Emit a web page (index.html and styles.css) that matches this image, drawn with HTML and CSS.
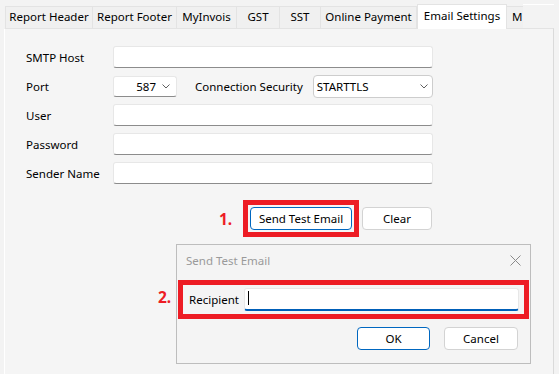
FILE: index.html
```html
<!DOCTYPE html>
<html lang="en">
<head>
    <meta charset="UTF-8">
    <title>Email Settings</title>
    <link rel="stylesheet" href="styles.css">
</head>
<body>
    <div class="tabs">
        <div class="tab w-header">Report Header</div>
        <div class="tab w-footer">Report Footer</div>
        <div class="tab w-myinvois">MyInvois</div>
        <div class="tab w-gst">GST</div>
        <div class="tab w-sst">SST</div>
        <div class="tab w-online">Online Payment</div>
        <div class="tab active w-email">Email Settings</div>
        <div class="tab cut">M</div>
        <div class="tab-fill"></div>
    </div>

    <div class="panel">
        <div class="form">
            <div class="row">
                <span class="label">SMTP Host</span>
                <div class="field wide"></div>
            </div>
            <div class="row">
                <span class="label">Port</span>
                <div class="field combo port">
                    <span class="value">587</span>
                    <svg class="chevron" width="8" height="5" viewBox="0 0 8 5"><polyline points="0.5,0.5 4,4 7.5,0.5" fill="none" stroke="#606060" stroke-width="1"/></svg>
                </div>
                <span class="label security">Connection Security</span>
                <div class="select">
                    <span class="value">STARTTLS</span>
                    <svg class="chevron" width="8" height="5" viewBox="0 0 8 5"><polyline points="0.5,0.5 4,4 7.5,0.5" fill="none" stroke="#606060" stroke-width="1"/></svg>
                </div>
            </div>
            <div class="row">
                <span class="label">User</span>
                <div class="field wide"></div>
            </div>
            <div class="row">
                <span class="label">Password</span>
                <div class="field wide"></div>
            </div>
            <div class="row">
                <span class="label">Sender Name</span>
                <div class="field wide"></div>
            </div>
        </div>

        <div class="actions">
            <span class="step">1.</span>
            <span class="mark"><button class="btn primary send">Send Test Email</button></span>
            <button class="btn clear">Clear</button>
        </div>

        <div class="dialog">
            <div class="dialog-title">
                <span>Send Test Email</span>
                <svg width="11" height="11" viewBox="0 0 11 11"><path d="M0.5 0.5 L10.5 10.5 M10.5 0.5 L0.5 10.5" stroke="#8a8a8a" stroke-width="1" fill="none"/></svg>
            </div>
            <div class="dialog-row">
                <span class="step step-two">2.</span>
                <span class="dialog-label">Recipient</span>
                <div class="field focused"><span class="caret"></span></div>
            </div>
            <div class="dialog-buttons">
                <button class="btn primary ok">OK</button>
                <button class="btn cancel">Cancel</button>
            </div>
        </div>
    </div>
</body>
</html>
```

FILE: styles.css
```css
body {
    margin: 0;
    background: #f3f3f3;
    font-family: 'Noto Sans', 'Liberation Sans', sans-serif;
    font-size: 11.5px;
    color: #000;
    width: 559px;
    height: 374px;
    overflow: hidden;
}

/* tab strip */
.tabs {
    display: flex;
    align-items: flex-end;
    height: 29px;
    padding-left: 5px;
    width: 554px;
    box-sizing: border-box;
    position: relative;
    z-index: 1;
}

.tab {
    height: 22px;
    line-height: 20px;
    box-sizing: border-box;
    text-align: center;
    background: #f0f0f0;
    border: 1px solid #e3e3e3;
    border-left: none;
    border-bottom: none;
    margin-bottom: 1px;
    white-space: nowrap;
}

.tab:first-child {
    border-left: 1px solid #e3e3e3;
}

.w-header { width: 88px; }
.w-footer { width: 84px; }
.w-myinvois { width: 60px; }
.w-gst { width: 43px; }
.w-sst { width: 41px; }
.w-online { width: 96px; }

.tab.active {
    width: 90px;
    height: 25px;
    line-height: 21px;
    background: #fff;
    border-left: 1px solid #e3e3e3;
    margin-bottom: 0;
}

.tab.cut {
    width: 16px;
    overflow: hidden;
    text-align: left;
    padding-left: 5px;
    border-right: none;
}

.tab-fill {
    flex: 1;
    align-self: stretch;
    margin-top: 4px;
    border-top: 1px solid #fff;
}

/* main page */
.panel {
    margin-left: 4px;
    width: 550px;
    height: 346px;
    box-sizing: border-box;
    margin-top: -1px;
    border-top: 1px solid #e3e3e3;
    border-left: 1px solid #fff;
    border-right: 1px solid #dadada;
    background: #f5f5f5;
    padding-top: 17px;
}

.form {
    display: flex;
    flex-direction: column;
    gap: 7px;
    padding-left: 21px;
}

.row {
    display: flex;
    align-items: center;
    height: 22px;
}

.label {
    width: 87px;
    flex: none;
}

.label.security {
    width: auto;
    margin-left: 18px;
    margin-right: 10px;
}

.field {
    height: 22px;
    box-sizing: border-box;
    background: #fff;
    border: 1px solid #e7e7e7;
    border-bottom: 1px solid #8c8c8c;
    border-radius: 3px;
}

.field.wide {
    width: 320px;
}

.combo {
    display: flex;
    align-items: center;
    justify-content: flex-end;
}

.port {
    width: 64px;
    height: 21px;
    padding-right: 6px;
}

.port .value {
    margin-right: 6px;
}

.select {
    width: 120px;
    height: 23px;
    box-sizing: border-box;
    background: #fff;
    border: 1px solid #cdcdcd;
    border-radius: 4px;
    display: flex;
    align-items: center;
    justify-content: space-between;
    padding: 0 4px 0 3px;
}

/* buttons */
.actions {
    display: flex;
    align-items: center;
    margin-top: 16px;
    padding-left: 214px;
}

.step {
    color: #ed1c24;
    font-weight: 700;
    font-size: 15.5px;
    line-height: 18px;
    width: 24px;
    flex: none;
}

.mark {
    display: flex;
    border: 5px solid #ed1c24;
    padding: 2px;
}

.btn {
    font-family: inherit;
    font-size: 11.5px;
    color: #000;
    height: 23px;
    padding: 0;
    background: #fff;
    border: 1px solid #d3d3d3;
    border-radius: 4px;
}

.btn.primary {
    border-color: #0067c0;
}

.send { width: 102px; }
.clear { width: 70px; margin-left: 3px; }

/* dialog */
.dialog {
    margin-top: 7px;
    margin-left: 171px;
    width: 355px;
    height: 120px;
    box-sizing: border-box;
    border: 1px solid #bdbdbd;
    background: #f4f4f4;
}

.dialog-title {
    height: 31px;
    display: flex;
    align-items: center;
    justify-content: space-between;
    padding: 0 9px 0 9px;
    color: #9a9a9a;
}

.dialog-row {
    position: relative;
    margin: 4px 1px 0 1px;
    border: 5px solid #ed1c24;
    padding: 3px 5px 3px 6px;
    display: flex;
    align-items: center;
}

.step-two {
    position: absolute;
    left: -25px;
    top: 3px;
}

.dialog-label {
    width: 55px;
    flex: none;
}

.field.focused {
    flex: 1;
    height: 23px;
    border-bottom: 2px solid #005fb8;
    padding: 2px 0 0 3px;
}

.caret {
    display: block;
    width: 1px;
    height: 14px;
    background: #000;
}

.dialog-buttons {
    display: flex;
    justify-content: flex-end;
    gap: 14px;
    padding: 8px 12px 0 0;
}

.ok { width: 73px; }
.cancel { width: 74px; }
```
